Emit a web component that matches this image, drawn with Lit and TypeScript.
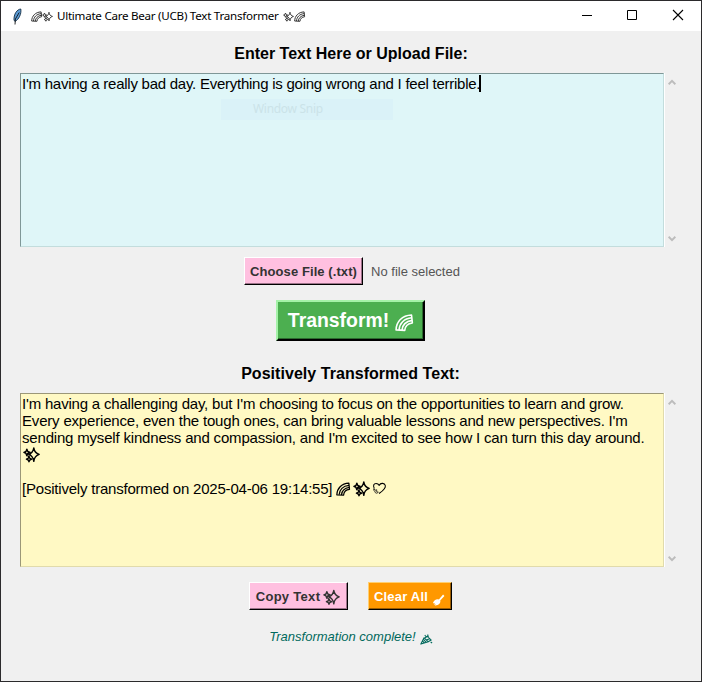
import { LitElement, html, css, svg } from "lit";
import { customElement, property } from "lit/decorators.js";

const rainbow = svg`<g fill="none" stroke="currentColor" stroke-linejoin="round">
  <path d="M1 15C1.2 7.4 6.6 1.2 15.6 .9L16.4 8.4C12.4 8.8 9.6 11.4 9.2 15.4Z" stroke-width="1.5"/>
  <path d="M3.8 15C4.2 9 8.4 4.2 15.8 3.5M6.6 15.2C7 10.6 10.2 7 16.2 6" stroke-width="1.5"/>
</g>`;
const sparkles = svg`<g stroke="currentColor" stroke-width="1.4" stroke-linejoin="round">
  <path d="M10.8 1.4C11.3 5.2 12.6 6.8 16.2 7.9C12.6 9 11.3 10.8 10.8 14.8C10.2 10.8 8.9 9 5.8 7.9C8.9 6.8 10.2 5.2 10.8 1.4Z" fill="none"/>
  <path d="M3.8 2.6L4.8 5L7.2 5.8L4.8 6.9L3.8 9.2L3 6.9L.9 5.8L3 5ZM6 10L6.8 11.8L8.8 12.7L6.8 13.5L6 15.3L5.2 13.5L3.4 12.7L5.2 11.8Z" fill="none"/>
  <path d="M5 6.6L7.4 8.8M4.6 9L6.4 11" fill="none" stroke-width="1.2"/>
</g>`;
const heart = svg`<g fill="none" stroke="currentColor" stroke-width="1.2" stroke-linejoin="round">
  <path d="M2.6 8C.8 4.4 2.2 2.4 4.6 2.4C6.2 2.4 7.5 3.2 8 4.5C9 2.8 10.4 2 12 2.2C15.4 2.6 16 5.7 14 8.2C12.6 10.3 10.4 12 8 13.6"/>
  <path d="M2.2 8.2L3.4 10L5.4 9.4L5.2 11.5L7.2 12.2L5.5 13.4L3.8 12.8L3.2 11L1.8 10Z" stroke-width=".8"/>
</g>`;
const broom = svg`<path d="M14.6 .8L16.4 2.6L10.8 8.8C11.8 12.4 8.4 15.6 3.4 15.2L5 13.8L2.2 14.2L3.8 12.2L1 12.2C2.4 7.8 6 6 9 7.2Z" fill="currentColor"/>`;
const popper = svg`<g fill="none" stroke="currentColor" stroke-width="1.4" stroke-linejoin="round">
  <path d="M1 14.8L5.2 6.4L11 11.8ZM4.4 8.6L8.4 12.8M3.4 11L6 13.4M6 7L9.6 4.4L14.8 9.4L10.6 11.6M6.2 2.6L8.4 5.6M8 9.2L13 7.8M10 2L11 5.6M14 12L16 13.4"/>
</g>`;
const glyphs: Record<string, unknown> = { rainbow, sparkles, heart, broom, popper };

@customElement("ui-glyph")
export class UiGlyph extends LitElement {
  static styles = css`
    :host { display: inline-block; flex: none; }
    svg { display: block; width: 100%; height: 100%; overflow: visible; }
  `;
  @property() name = "rainbow";
  render() {
    return html`<svg viewBox="0 0 17 16">${glyphs[this.name]}</svg>`;
  }
}

@customElement("title-bar")
export class TitleBar extends LitElement {
  static styles = css`
    :host { display: flex; align-items: center; height: 30px; background: #fff; color: #000; }
    .feather { width: 10px; height: 17px; margin: 0 9px 0 11px; }
    .name { flex: 1; display: flex; align-items: center; font: 11.6px/16px "Noto Sans", sans-serif; }
    .label { white-space: nowrap; margin: 0 4px 0 4px; letter-spacing: -0.26px; }
    ui-glyph { width: 11px; height: 11px; color: #333; }
    .control { width: 46px; height: 30px; flex: none; }
    .controls { display: flex; margin-right: -1px; }
  `;
  render() {
    return html`
      <svg class="feather" viewBox="0 0 10 17">
        <path d="M8.8 1C5 1.4 1.6 6 2 12.4L3.2 13.4C6.8 11.4 9.6 6 8.8 1Z" fill="#5b9bd5" stroke="#142c42" stroke-width=".9"/>
        <path d="M7.2 4.5L3.4 11L3 16.5" fill="none" stroke="#111" stroke-width=".9"/>
      </svg>
      <div class="name">
        <ui-glyph name="rainbow"></ui-glyph><ui-glyph name="sparkles"></ui-glyph>
        <span class="label">Ultimate Care Bear (UCB) Text Transformer</span>
        <ui-glyph name="sparkles"></ui-glyph><ui-glyph name="rainbow"></ui-glyph>
      </div>
      <div class="controls">
        <svg class="control" viewBox="0 0 46 30"><path d="M18 14.5h10" stroke="#000"/></svg>
        <svg class="control" viewBox="0 0 46 30"><path d="M17.5 9.5h9v9h-9z" fill="none" stroke="#000"/></svg>
        <svg class="control" viewBox="0 0 46 30"><path d="M17 9l10 10M27 9l-10 10" stroke="#000" stroke-width="1.1"/></svg>
      </div>
    `;
  }
}

@customElement("text-pane")
export class TextPane extends LitElement {
  static styles = css`
    :host { display: flex; height: 174px; margin: 0 18px 0 19px; }
    .field {
      width: 644px; box-sizing: border-box; flex: none; padding: 1px;
      border: 1px solid; border-color: #7f9797 #c3dddd #c3dddd #7f9797;
      background: #dff6f8; box-shadow: 1px 0 #fff;
    }
    :host([tone="lemon"]) .field { background: #fff9c4; border-color: #9b9778 #e1dbac #e1dbac #9b9778; }
    .bar { flex: 1; display: flex; flex-direction: column; justify-content: space-between; align-items: center; padding: 6px 3px 5px 0; }
    .arrow { width: 8px; height: 7px; }
  `;
  @property({ reflect: true }) tone = "aqua";
  render() {
    return html`
      <div class="field"><slot></slot></div>
      <div class="bar">
        <svg class="arrow" viewBox="0 0 8 7"><path d="M.6 5.2L4 1.8L7.4 5.2" fill="none" stroke="#bcbcbc" stroke-width="2"/></svg>
        <svg class="arrow" viewBox="0 0 8 7"><path d="M.6 1.8L4 5.2L7.4 1.8" fill="none" stroke="#bcbcbc" stroke-width="2"/></svg>
      </div>
    `;
  }
}

@customElement("app-root")
export class AppRoot extends LitElement {
  static styles = css`
    :host {
      display: block; box-sizing: border-box; width: 702px; height: 682px; overflow: hidden;
      border: 1px solid #2b2a2c; background: #f0f0f0; color: #000;
      font-family: "Liberation Sans", Arial, sans-serif;
    }
    .heading { font-size: 16px; line-height: 20px; font-weight: bold; text-align: center; }
    .first { margin: 13px 0 9px; }
    .second { margin: 23px 0 9px; padding-right: 1px; letter-spacing: 0.04px; }
    .line { display: flex; align-items: center; height: 17px; font-size: 15px; line-height: 17px; white-space: pre; letter-spacing: -0.2px; }
    .typed { letter-spacing: -0.25px; }
    .even { letter-spacing: -0.185px; }
    .line ui-glyph { width: 17px; height: 17px; margin-right: 2px; }
    .line .bow { width: 14px; height: 14px; margin: 1px 3px 0 0; }
    .line .heart { width: 15px; height: 15px; }
    .lone { padding-left: 1px; }
    .stamp { letter-spacing: -0.21px; }
    .caret { width: 2px; height: 17px; background: #000; margin-left: -1px; }
    .ghost {
      width: 172px; height: 21px; margin: 7px 0 0 199px; background: #daf2f8; color: #cbe3e8;
      font: 12px/19px "Noto Sans", sans-serif; text-indent: 32px; letter-spacing: -0.3px;
    }
    .row { display: flex; justify-content: center; align-items: center; }
    .btn {
      box-sizing: border-box; display: flex; align-items: center; justify-content: center; white-space: nowrap;
      font-size: 13px; line-height: 16px; font-weight: bold; height: 28px;
      background: #ffc0e0; color: #333; border: 1px solid; border-color: #fff #000 #000 #fff;
      box-shadow: inset -1px -1px #9c7389;
    }
    .btn ui-glyph { width: 17px; height: 16px; margin-left: 4px; }
    .files { margin-top: 10px; padding-left: 2px; }
    .choose { width: 119px; letter-spacing: 0.08px; padding-top: 1px; }
    .hint { font-size: 13px; line-height: 16px; color: #555; margin: 1px 0 0 8px; }
    .transform {
      width: 149px; height: 41px; font-size: 19.4px; line-height: 24px; background: #4caf50; color: #fff;
      border: 2px solid; border-color: #a5f2a8 #000 #000 #a5f2a8; box-shadow: inset -1px -1px #2c6a2f;
      padding-bottom: 2px;
    }
    .transform ui-glyph { width: 18px; height: 17px; margin: 6px 0 0 6px; }
    .go { margin-top: 15px; padding-right: 1px; }
    .tools { margin-top: 15px; gap: 20px; padding-right: 2px; }
    .tools .btn { padding-top: 2px; letter-spacing: 0.2px; }
    .copy { width: 99px; }
    .tools .copy { letter-spacing: 0.3px; }
    .clear { width: 84px; background: #ff9800; color: #fff; border-color: #ffcf70 #000 #000 #ffcf70; box-shadow: inset -1px -1px #9b5c00; }
    .clear ui-glyph { width: 13px; height: 12px; margin-top: 5px; }
    .copy ui-glyph { margin: -1px 0 0 3px; }
    .status { margin-top: 18px; font-size: 13px; line-height: 16px; font-style: italic; color: #00695c; }
    .status ui-glyph { width: 13px; height: 12px; margin: 5px 0 0 4px; }
  `;
  render() {
    return html`
      <title-bar></title-bar>
      <div class="heading first">Enter Text Here or Upload File:</div>
      <text-pane>
        <div class="line typed"><span>I'm having a really bad day. Everything is going wrong and I feel terrible.</span><i class="caret"></i></div>
        <div class="ghost">Window Snip</div>
      </text-pane>
      <div class="row files">
        <div class="btn choose">Choose File (.txt)</div>
        <span class="hint">No file selected</span>
      </div>
      <div class="row go"><div class="btn transform">Transform!<ui-glyph name="rainbow"></ui-glyph></div></div>
      <div class="heading second">Positively Transformed Text:</div>
      <text-pane tone="lemon">
        <div class="line">I'm having a challenging day, but I'm choosing to focus on the opportunities to learn and grow.</div>
        <div class="line even">Every experience, even the tough ones, can bring valuable lessons and new perspectives. I'm</div>
        <div class="line even">sending myself kindness and compassion, and I'm excited to see how I can turn this day around.</div>
        <div class="line lone"><ui-glyph name="sparkles"></ui-glyph></div>
        <div class="line"></div>
        <div class="line stamp"><span>[Positively transformed on 2025-04-06 19:14:55] </span><ui-glyph class="bow" name="rainbow"></ui-glyph><ui-glyph name="sparkles"></ui-glyph><ui-glyph class="heart" name="heart"></ui-glyph></div>
      </text-pane>
      <div class="row tools">
        <div class="btn copy">Copy Text<ui-glyph name="sparkles"></ui-glyph></div>
        <div class="btn clear">Clear All<ui-glyph name="broom"></ui-glyph></div>
      </div>
      <div class="row status">Transformation complete!<ui-glyph name="popper"></ui-glyph></div>
    `;
  }
}
